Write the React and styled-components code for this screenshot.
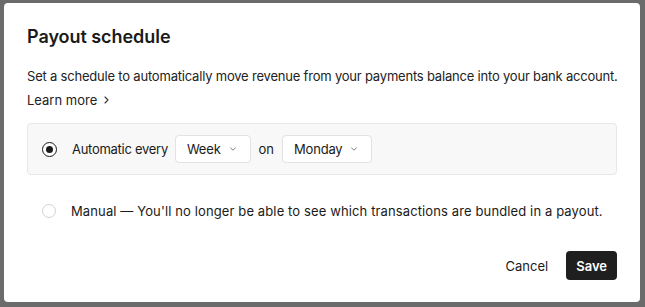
import React, { useState } from 'react';
import styled, { createGlobalStyle } from 'styled-components';

const GlobalStyle = createGlobalStyle`
  html, body {
    margin: 0;
    padding: 0;
    background: #6b6b6b;
  }
  body {
    font-family: Inter, "Noto Sans", sans-serif;
    color: #1a1a1a;
    -webkit-font-smoothing: antialiased;
  }
`;

const Page = styled.div`
  width: 645px;
  height: 307px;
  padding: 3px 5px 0 4px;
  box-sizing: border-box;
`;

const Dialog = styled.div`
  width: 636px;
  height: 299px;
  box-sizing: border-box;
  background: #fff;
  border-radius: 4px;
  padding: 22px 23px 22px;
  display: flex;
  flex-direction: column;
`;

const Title = styled.h2`
  margin: 0;
  font-size: 18px;
  line-height: 24px;
  font-weight: 600;
  letter-spacing: -0.05px;
`;

const Description = styled.div`
  margin-top: 15px;
  font-size: 13px;
  line-height: 24px;
  color: #222;
  white-space: nowrap;
`;

const Lead = styled.span`
  letter-spacing: -0.2px;
`;

const LearnMore = styled.a`
  display: inline-flex;
  align-items: center;
  gap: 7px;
  color: #222;
  text-decoration: none;
  cursor: pointer;
`;

const Options = styled.div`
  margin-top: 11px;
  display: flex;
  flex-direction: column;
  gap: 10px;
`;

const Option = styled.label`
  display: flex;
  align-items: center;
  height: 52px;
  box-sizing: border-box;
  padding: 0 14px;
  border-radius: 4px;
  border: 1px solid ${(p) => (p.$active ? '#e7e7e7' : 'transparent')};
  background: ${(p) => (p.$active ? '#f8f8f8' : 'transparent')};
  font-size: 13px;
  white-space: nowrap;
  cursor: pointer;
`;

const Radio = styled.span`
  width: ${(p) => (p.$checked ? '15px' : '14px')};
  height: ${(p) => (p.$checked ? '15px' : '14px')};
  box-sizing: border-box;
  border-radius: 50%;
  border: ${(p) => (p.$checked ? '1.6px solid #1a1a1a' : '1px solid #d2d2d2')};
  background: #fff;
  display: flex;
  align-items: center;
  justify-content: center;
  margin-right: 15px;
  flex-shrink: 0;

  &::after {
    content: '';
    width: 7px;
    height: 7px;
    border-radius: 50%;
    background: #1a1a1a;
    display: ${(p) => (p.$checked ? 'block' : 'none')};
  }
`;

const Inline = styled.div`
  display: flex;
  align-items: center;
  gap: 8px;
`;

const Tight = styled.span`
  letter-spacing: -0.28px;
  margin-right: -1px;
`;

const Loose = styled.span`
  letter-spacing: 0.12px;
`;

const Select = styled.button`
  display: inline-flex;
  align-items: center;
  gap: 9px;
  height: 28px;
  padding: 0 14px 0 11px;
  border: 1px solid #e2e2e2;
  border-radius: 4px;
  background: #fff;
  font: inherit;
  font-size: 13px;
  letter-spacing: -0.2px;
  color: #1a1a1a;
  cursor: pointer;
`;

const Footer = styled.div`
  margin-top: auto;
  display: flex;
  justify-content: flex-end;
  align-items: center;
  gap: 7px;
`;

const Button = styled.button`
  height: 29px;
  padding: 0 ${(p) => (p.$primary ? '10px' : '11px')};
  border-radius: 4px;
  font: inherit;
  font-size: 13px;
  cursor: pointer;
  border: none;
  background: ${(p) => (p.$primary ? '#1f1f1f' : 'transparent')};
  color: ${(p) => (p.$primary ? '#fff' : '#1a1a1a')};
  font-weight: ${(p) => (p.$primary ? 600 : 400)};
`;

const Chevron = ({ dir = 'down' }) =>
  dir === 'down' ? (
    <svg width="6" height="4" viewBox="0 0 6 4" fill="none" stroke="#808080" strokeWidth="1" strokeLinecap="round" strokeLinejoin="round">
      <path d="M0.5 0.75 L3 3.25 L5.5 0.75" />
    </svg>
  ) : (
    <svg width="5" height="8" viewBox="0 0 5 8" fill="none" stroke="#333" strokeWidth="1.1" strokeLinecap="round" strokeLinejoin="round">
      <path d="M1 1 L4 4 L1 7" />
    </svg>
  );

const App = () => {
  const [mode, setMode] = useState('auto');

  return (
    <>
      <GlobalStyle />
      <Page>
        <Dialog>
          <Title>Payout schedule</Title>
          <Description>
            <Lead>Set a schedule to automatically move revenue from your payments balance into your bank account.</Lead>
            <br />
            <LearnMore>
              Learn more <Chevron dir="right" />
            </LearnMore>
          </Description>
          <Options>
            <Option $active={mode === 'auto'} onClick={() => setMode('auto')}>
              <Radio $checked={mode === 'auto'} />
              <Inline>
                <Tight>Automatic every</Tight>
                <Select>
                  Week <Chevron />
                </Select>
                <span>on</span>
                <Select>
                  Monday <Chevron />
                </Select>
              </Inline>
            </Option>
            <Option $active={mode === 'manual'} onClick={() => setMode('manual')}>
              <Radio $checked={mode === 'manual'} />
              <Loose>Manual — You'll no longer be able to see which transactions are bundled in a payout.</Loose>
            </Option>
          </Options>
          <Footer>
            <Button>Cancel</Button>
            <Button $primary>Save</Button>
          </Footer>
        </Dialog>
      </Page>
    </>
  );
};

export default App;
